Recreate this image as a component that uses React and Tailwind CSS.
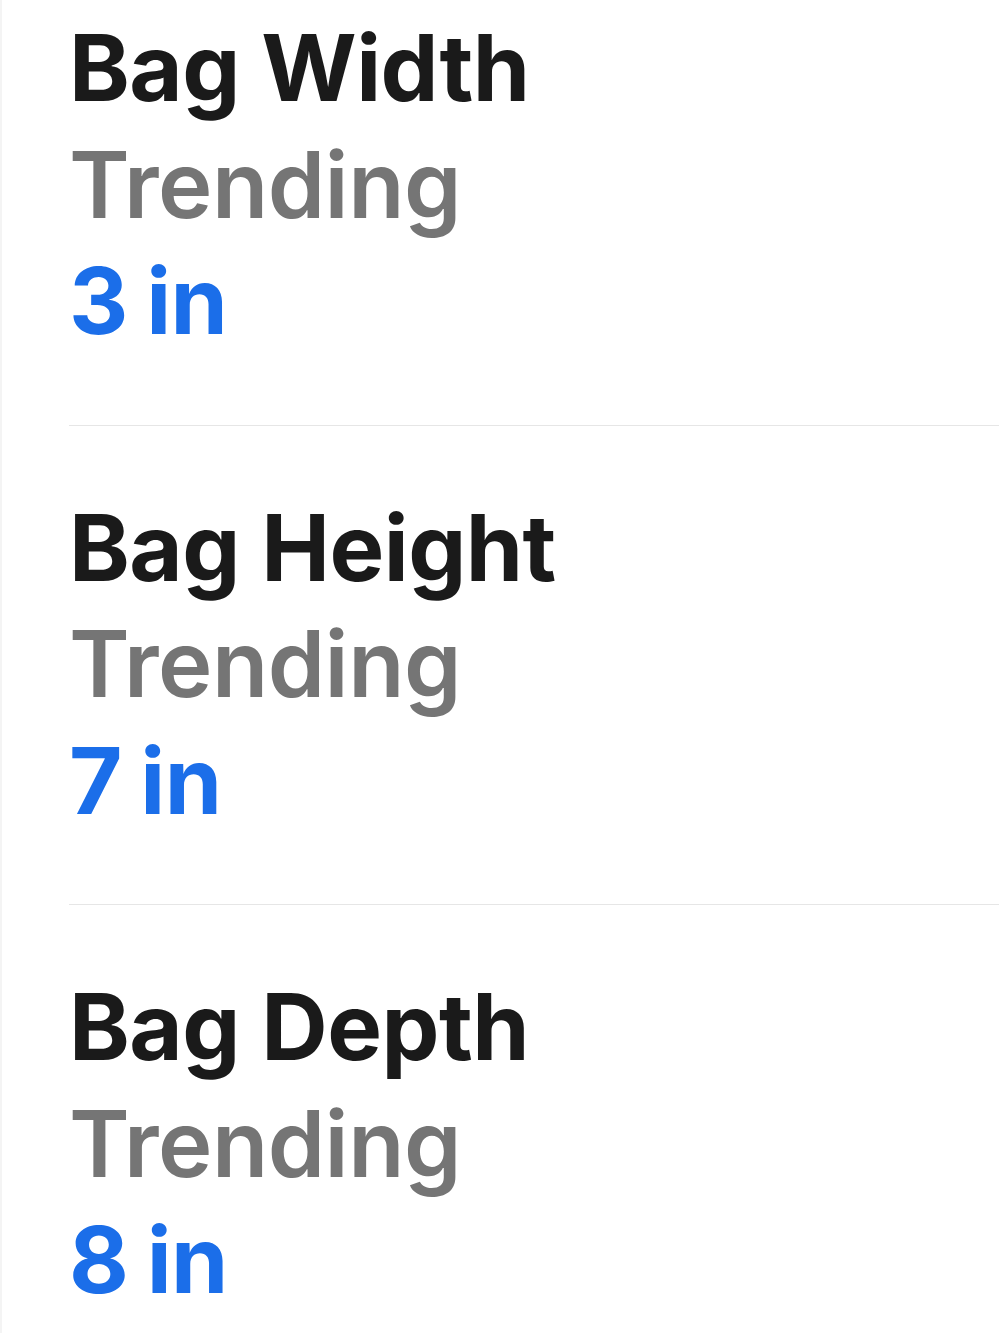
export default function App() {
  const items = [
    { title: "Bag Width", value: "3 in" },
    { title: "Bag Height", value: "7 in" },
    { title: "Bag Depth", value: "8 in" },
  ];
  return (
    <div
      className="min-h-[1333px] w-full bg-white border-l-2 border-[#f4f4f4]"
      style={{ fontFamily: "Inter, 'Noto Sans', sans-serif" }}
    >
      <div className="pl-[67px]">
        {items.map((it, i) => (
          <div
            key={it.title}
            className={
              i === 0
                ? "pt-[10px] pb-[65px] border-b border-[#e6e6e6]"
                : i === 1
                ? "pt-[64px] pb-[65px] border-b border-[#e6e6e6]"
                : "pt-[64px] pb-[40px]"
            }
          >
            <div className="text-[92px] leading-[116.5px] font-bold text-[#1a1a1a] tracking-[-0.5px]">
              {it.title}
            </div>
            <div className="text-[92px] leading-[116.5px] font-semibold text-[#757575] tracking-[-0.5px]">
              Trending
            </div>
            <div className="text-[92px] leading-[116.5px] font-bold text-[#1b6ee9] tracking-[-0.5px] [word-spacing:-3px]">
              {it.value}
            </div>
          </div>
        ))}
      </div>
    </div>
  );
}
